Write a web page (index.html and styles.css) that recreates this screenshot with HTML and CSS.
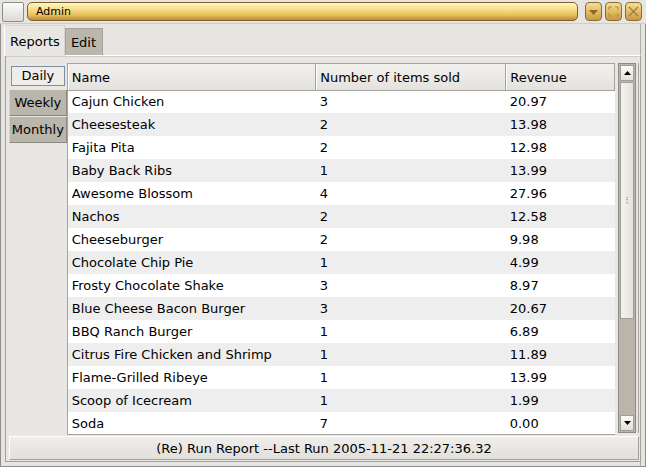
FILE: index.html
```html
<!DOCTYPE html>
<html lang="en">

<head>
    <meta charset="utf-8">
    <title>Admin</title>
    <link rel="stylesheet" href="styles.css">
</head>

<body>
    <header class="titlebar">
        <div class="sysbtn"></div>
        <div class="title">Admin</div>
        <div class="winbtn">
            <svg width="11" height="8" viewBox="0 0 11 8"><path d="M1 2h9l-4.5 5z" fill="#8a6a28"/></svg>
        </div>
        <div class="winbtn">
            <svg width="11" height="11" viewBox="0 0 11 11" fill="none" stroke="#b39048" stroke-width="1.2"><path d="M1 4V1h3M7 1h3v3M10 7v3H7M4 10H1V7"/></svg>
        </div>
        <div class="winbtn">
            <svg width="11" height="11" viewBox="0 0 11 11" stroke="#9b7b3a" stroke-width="1.2"><path d="M1 1l9 9M10 1l-9 9"/></svg>
        </div>
    </header>

    <main class="window">
        <nav class="tabs">
            <button class="tab valgt">Reports</button>
            <button class="tab">Edit</button>
        </nav>

        <section class="panel">
            <div class="content">
                <div class="periods">
                    <button class="period valgt"><span>Daily</span></button>
                    <button class="period">Weekly</button>
                    <button class="period">Monthly</button>
                </div>

                <div class="tablebox">
                    <table>
                        <thead>
                            <tr><th class="c1">Name</th><th class="c2">Number of items sold</th><th class="c3">Revenue</th></tr>
                        </thead>
                        <tbody>
                            <tr><td>Cajun Chicken</td><td>3</td><td>20.97</td></tr>
                            <tr><td>Cheesesteak</td><td>2</td><td>13.98</td></tr>
                            <tr><td>Fajita Pita</td><td>2</td><td>12.98</td></tr>
                            <tr><td>Baby Back Ribs</td><td>1</td><td>13.99</td></tr>
                            <tr><td>Awesome Blossom</td><td>4</td><td>27.96</td></tr>
                            <tr><td>Nachos</td><td>2</td><td>12.58</td></tr>
                            <tr><td>Cheeseburger</td><td>2</td><td>9.98</td></tr>
                            <tr><td>Chocolate Chip Pie</td><td>1</td><td>4.99</td></tr>
                            <tr><td>Frosty Chocolate Shake</td><td>3</td><td>8.97</td></tr>
                            <tr><td>Blue Cheese Bacon Burger</td><td>3</td><td>20.67</td></tr>
                            <tr><td>BBQ Ranch Burger</td><td>1</td><td>6.89</td></tr>
                            <tr><td>Citrus Fire Chicken and Shrimp</td><td>1</td><td>11.89</td></tr>
                            <tr><td>Flame-Grilled Ribeye</td><td>1</td><td>13.99</td></tr>
                            <tr><td>Scoop of Icecream</td><td>1</td><td>1.99</td></tr>
                            <tr><td>Soda</td><td>7</td><td>0.00</td></tr>
                        </tbody>
                    </table>
                </div>

                <div class="scrollbar">
                    <div class="arrow">
                        <svg width="7" height="4" viewBox="0 0 7 4"><path d="M0 4h7L3.5 0z" fill="#000"/></svg>
                    </div>
                    <div class="thumb"><span class="grip">⁝</span></div>
                    <div class="trough"></div>
                    <div class="arrow">
                        <svg width="7" height="4" viewBox="0 0 7 4"><path d="M0 0h7L3.5 4z" fill="#000"/></svg>
                    </div>
                </div>
            </div>

            <button class="run">(Re) Run Report --Last Run 2005-11-21 22:27:36.32</button>
        </section>
    </main>
</body>

</html>
```

FILE: styles.css
```css
* {
    box-sizing: border-box;
}

body {
    margin: 0;
    width: 646px;
    height: 467px;
    overflow: hidden;
    background-color: #e6e5e1;
    font-family: "DejaVu Sans", sans-serif;
    font-size: 13px;
    color: #000;
}

button {
    font-family: inherit;
    font-size: 13px;
    color: #000;
    padding: 0;
    margin: 0;
}

/***************titlebar**************/

.titlebar {
    display: flex;
    align-items: center;
    height: 24px;
    padding: 0 4px 0 2px;
    gap: 3px;
    border-bottom: 1px solid #cfcdc7;
}

.sysbtn {
    width: 22px;
    height: 20px;
    border: 1px solid #8e8c86;
    border-radius: 2px;
    background: linear-gradient(#fbfbfa, #dcdad5);
}

.title {
    flex: 1;
    height: 19px;
    margin-right: 4px;
    padding-left: 8px;
    border: 1px solid #7d6128;
    border-radius: 5px;
    background: linear-gradient(#fff6c8, #f8e08a 35%, #e8c25e 70%, #b98d3d);
    font-size: 11px;
    line-height: 17px;
}

.winbtn {
    width: 17px;
    height: 19px;
    display: flex;
    align-items: center;
    justify-content: center;
    border: 1px solid #8a6c2e;
    border-radius: 4px;
    background: linear-gradient(#f6de96, #e2bd64 50%, #c79a46);
}

/***************window**************/

.window {
    height: 443px;
    padding: 1px 4px 0 3px;
    border-left: 1px solid #8f8d88;
    border-right: 1px solid #8f8d88;
    border-bottom: 1px solid #8f8d88;
    box-shadow: inset -4px 0 0 #e6e5e1, inset -5px 0 0 #b0aea8;
}

.tabs {
    display: flex;
    align-items: flex-end;
    height: 30px;
}

.tab {
    height: 27px;
    padding: 0 6px 0 5px;
    border: 1px solid #a5a29b;
    border-bottom: none;
    background-color: #bbb7ad;
    line-height: 25px;
}

.tab.valgt {
    height: 31px;
    padding: 0 4px 0 5px;
    background-color: #e8e7e3;
    border-color: #d7d5d0;
    border-left: 1px solid #fff;
    position: relative;
    top: 1px;
    z-index: 1;
}

.panel {
    height: 407px;
    margin-left: 1px;
    padding: 7px 4px 2px 3px;
    border: 1px solid #a3a09a;
    border-top-color: #fff;
    box-shadow: inset 0 1px 0 #d0cec9;
    background-color: #e8e7e3;
}

.content {
    display: flex;
    height: 372px;
}

/***************periods**************/

.periods {
    width: 58px;
    display: flex;
    flex-direction: column;
}

.period {
    height: 26px;
    margin-bottom: 1px;
    border: none;
    border-left: 1px solid #d7d4cd;
    border-right: 1px solid #8c8880;
    border-bottom: 1px solid #8c8880;
    background-color: #bab6ab;
}

.period.valgt {
    padding: 2px;
    background-color: #e8e7e3;
    border: none;
}

.period.valgt span {
    display: block;
    height: 20px;
    line-height: 18px;
    border: 1px solid #7d8fa5;
    background-color: #eeedea;
}

/***************table**************/

.tablebox {
    width: 551px;
    height: 372px;
    overflow: hidden;
    border: 1px solid #a8a59f;
    border-right: none;
    background-color: #fff;
}

table {
    width: 100%;
    border-collapse: collapse;
    table-layout: fixed;
}

th {
    height: 26px;
    padding: 2px 0 0 4px;
    text-align: left;
    font-weight: normal;
    background: linear-gradient(#f1f0ed, #e3e2de);
    border-right: 1px solid #a6a39c;
    border-bottom: 1px solid #a6a39c;
    box-shadow: inset 1px 0 0 #fff;
}

.c1 {
    width: 248px;
}

.c2 {
    width: 190px;
}

td {
    height: 23px;
    padding: 0 0 0 4px;
    white-space: nowrap;
}

tbody tr:nth-child(even) {
    background-color: #eeeeee;
}

/***************scrollbar**************/

.scrollbar {
    width: 18px;
    height: 370px;
    margin-left: 3px;
    padding: 1px;
    display: flex;
    flex-direction: column;
    border: 1px solid #8e8b84;
    background-color: #bab5aa;
    box-shadow: 2px 0 0 #e6e5e1, 3px 0 0 #a9a69f;
}

.arrow {
    height: 16px;
    display: flex;
    align-items: center;
    justify-content: center;
    border: 1px solid #a19e97;
    background: linear-gradient(#fbfbfa, #e1dfda);
}

.thumb {
    height: 237px;
    display: flex;
    align-items: center;
    justify-content: center;
    margin-top: 1px;
    border: 1px solid #a19e97;
    background: linear-gradient(90deg, #f3f2ef, #e4e2dd);
}

.grip {
    font-size: 10px;
    color: #888;
    line-height: 10px;
}

.trough {
    flex: 1;
}

/***************run**************/

.run {
    display: block;
    width: 630px;
    height: 24px;
    margin-top: 1px;
    border: 1px solid #a3a09a;
    border-top-color: #fff;
    border-left-color: #fff;
    background: linear-gradient(#efeeeb, #e0dfda);
}
```
